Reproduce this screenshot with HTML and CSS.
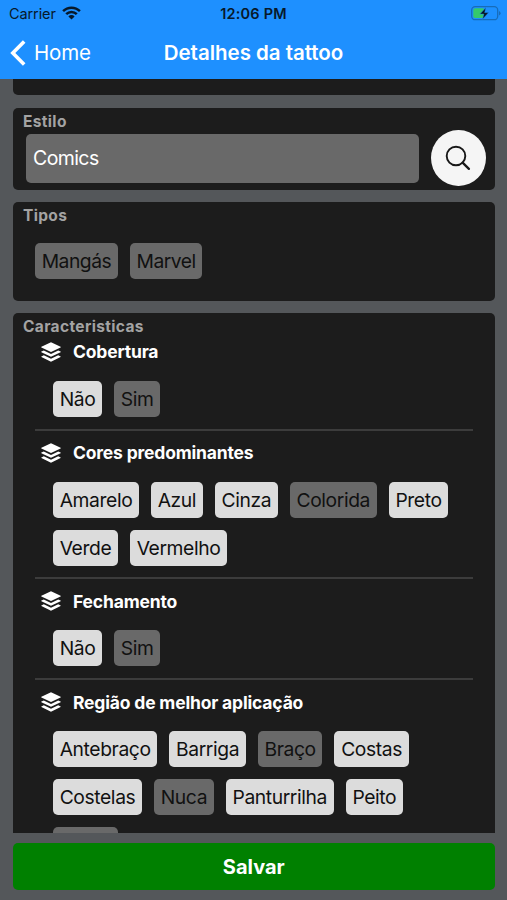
FILE: index.html
```html
<!DOCTYPE html>
<html lang="pt">
<head>
<meta charset="utf-8">
<title>Detalhes da tattoo</title>
<link rel="stylesheet" href="styles.css">
</head>
<body>
<svg class="defs" width="0" height="0">
  <symbol id="layers" viewBox="0 0 20 20">
    <path d="M10 .2 19.6 4.8 Q20 5.1 19.6 5.4L10 10 .4 5.4Q0 5.1 .4 4.8Z"/>
    <path d="M.4 9.6 2.8 8.5 10 11.9 17.2 8.5 19.6 9.6Q20 9.9 19.6 10.2L10 14.8 .4 10.2Q0 9.9 .4 9.6Z"/>
    <path d="M.4 14.4 2.8 13.3 10 16.7 17.2 13.3 19.6 14.4Q20 14.7 19.6 15L10 19.7 .4 15Q0 14.7 .4 14.4Z"/>
  </symbol>
</svg>
<div class="app">
  <header class="header">
    <div class="status">
      <div class="carrier"><span>Carrier</span>
        <svg width="19" height="14" viewBox="0 0 19 14" fill="none" stroke="#07192b" stroke-width="2.5"><path d="M1.1 5.1a11.9 11.9 0 0 1 16.8 0M4.2 8.2a7.5 7.5 0 0 1 10.6 0"/><path d="M9.5 13.6 6.4 10.4a4.4 4.4 0 0 1 6.2 0Z" fill="#07192b" stroke="none"/></svg>
      </div>
      <div class="clock">12:06 PM</div>
      <svg class="battery" width="30" height="15" viewBox="0 0 30 15"><rect x=".7" y=".7" width="26" height="13" rx="3.5" fill="none" stroke="#176cb9" stroke-width="1.3"/><path d="M28 5v4.5q1.6-.7 1.6-2.2T28 5Z" fill="#176cb9"/><rect x="2.3" y="2.3" width="11.2" height="9.8" rx="1.8" fill="#35c96b"/><path d="M15 1.5 8.8 8.1h4l-1.3 5.2 6.2-6.7h-4Z" fill="#071522" stroke="#1e90ff" stroke-width=".5"/></svg>
    </div>
    <nav class="nav">
      <a class="back"><svg width="16" height="26" viewBox="0 0 16 26" fill="none" stroke="#fff" stroke-width="3.6"><path d="M14.2 1.5 2.8 13l11.4 11.5"/></svg><span>Home</span></a>
      <h1 class="title">Detalhes da tattoo</h1>
      <span></span>
    </nav>
  </header>
  <main class="scroll">
    <section class="card card-end"></section>
    <section class="card style-card">
      <h2 class="label">Estilo</h2>
      <div class="field-row">
        <div class="field">Comics</div>
        <div class="search"><svg width="26" height="26" viewBox="0 0 26 26" fill="none" stroke="#181818" stroke-width="1.9"><circle cx="11" cy="11" r="9.3"/><path d="m17.6 17.6 6.3 6.3" stroke-width="2.3" stroke-linecap="round"/></svg></div>
      </div>
    </section>
    <section class="card types-card">
      <h2 class="label">Tipos</h2>
      <div class="chips"><span class="chip on">Mangás</span><span class="chip on">Marvel</span></div>
    </section>
    <section class="card features">
      <h2 class="label">Caracteristicas</h2>
      <div class="group">
        <h3 class="heading"><svg class="icon"><use href="#layers"/></svg>Cobertura</h3>
        <div class="chips"><span class="chip">Não</span><span class="chip on">Sim</span></div>
      </div>
      <div class="group">
        <h3 class="heading"><svg class="icon"><use href="#layers"/></svg>Cores predominantes</h3>
        <div class="chips"><span class="chip">Amarelo</span><span class="chip">Azul</span><span class="chip">Cinza</span><span class="chip on">Colorida</span><span class="chip">Preto</span><span class="chip">Verde</span><span class="chip">Vermelho</span></div>
      </div>
      <div class="group">
        <h3 class="heading"><svg class="icon"><use href="#layers"/></svg>Fechamento</h3>
        <div class="chips"><span class="chip">Não</span><span class="chip on">Sim</span></div>
      </div>
      <div class="group">
        <h3 class="heading"><svg class="icon"><use href="#layers"/></svg>Região de melhor aplicação</h3>
        <div class="chips"><span class="chip">Antebraço</span><span class="chip">Barriga</span><span class="chip on">Braço</span><span class="chip">Costas</span><span class="chip">Costelas</span><span class="chip on">Nuca</span><span class="chip">Panturrilha</span><span class="chip">Peito</span><span class="chip on blank"></span></div>
      </div>
    </section>
  </main>
  <footer class="footer"><button class="save">Salvar</button></footer>
</div>
</body>
</html>
```
FILE: styles.css
```css
* { box-sizing: border-box; }
body, h1, h2, h3 { margin: 0; }
body { font-family: Inter, "Liberation Sans", sans-serif; background: #54575a; }
.defs { display: block; }
.app { height: 900px; display: flex; flex-direction: column; overflow: hidden; }
.header { height: 79px; flex: none; background: #1e90ff; }
.status { height: 27px; display: grid; grid-template-columns: 1fr auto 1fr; align-items: center; padding: 0 6px 0 9px; color: #07192b; }
.carrier { display: flex; align-items: center; gap: 6px; font-size: 14.5px; letter-spacing: -.1px; }
.carrier svg { margin-top: -2px; }
.clock { font-size: 14.5px; font-weight: 600; letter-spacing: .2px; margin-right: 3px; }
.battery { justify-self: end; }
.nav { height: 51px; display: grid; grid-template-columns: 1fr auto 1fr; align-items: center; padding: 0 10px; color: #fff; }
.back { display: flex; align-items: center; gap: 8px; font-size: 20.5px; letter-spacing: -.2px; }
.title { font-size: 20.5px; font-weight: 600; letter-spacing: -.02px; }
.scroll { flex: none; height: 754px; overflow: hidden; padding: 0 12.5px 0 13px; display: flex; flex-direction: column; gap: 12px; }
.card { flex: none; background: #1c1c1c; border-radius: 5px; }
.card-end { height: 16px; margin-bottom: .6px; border-radius: 0 0 5px 5px; }
.style-card { height: 82px; }
.types-card { height: 99px; }
.features { height: 600px; }
.label { padding: 4px 0 0 10px; font-size: 15.5px; line-height: 19px; font-weight: 700; letter-spacing: .35px; color: #a3a3a3; }
.field-row { display: flex; align-items: center; gap: 12px; padding-left: 13px; }
.field { width: 393px; height: 49px; padding-left: 7px; border-radius: 5px; background: #696969; color: #fff; font-size: 19.5px; line-height: 49px; letter-spacing: -.6px; }
.search { width: 54.5px; height: 56px; margin-top: -1px; border-radius: 50%; background: #f5f5f5; display: flex; align-items: center; justify-content: center; }
.chips { display: flex; flex-wrap: wrap; gap: 12px; }
.types-card .chips { padding: 18px 22px; }
.types-card .chip { letter-spacing: -.5px; }
.chip { height: 36px; padding: 0 6.7px; border-radius: 5px; background: #dcdcdc; color: #111; font-size: 19.3px; line-height: 37px; letter-spacing: -.4px; }
.chip.on { background: #696969; }
.blank { width: 65px; }
.group { margin: 0 22px; padding: 10px 0 11.75px 18px; border-top: 2px solid #3c3c3c; }
.group:nth-child(2) { border-top: 0; padding-top: 4.3px; }
.heading { height: 24px; display: flex; align-items: center; gap: 12px; margin: 0 0 17px -12px; font-size: 17.5px; font-weight: 700; letter-spacing: -.18px; color: #fff; }
.icon { width: 20px; height: 20px; fill: #fff; }
.footer { flex: 1; padding: 10px 12.5px 10px 13px; }
.save { display: block; width: 100%; height: 47px; border: 0; border-radius: 5px; background: green; color: #fff; font: 700 20px Inter, sans-serif; }
```
